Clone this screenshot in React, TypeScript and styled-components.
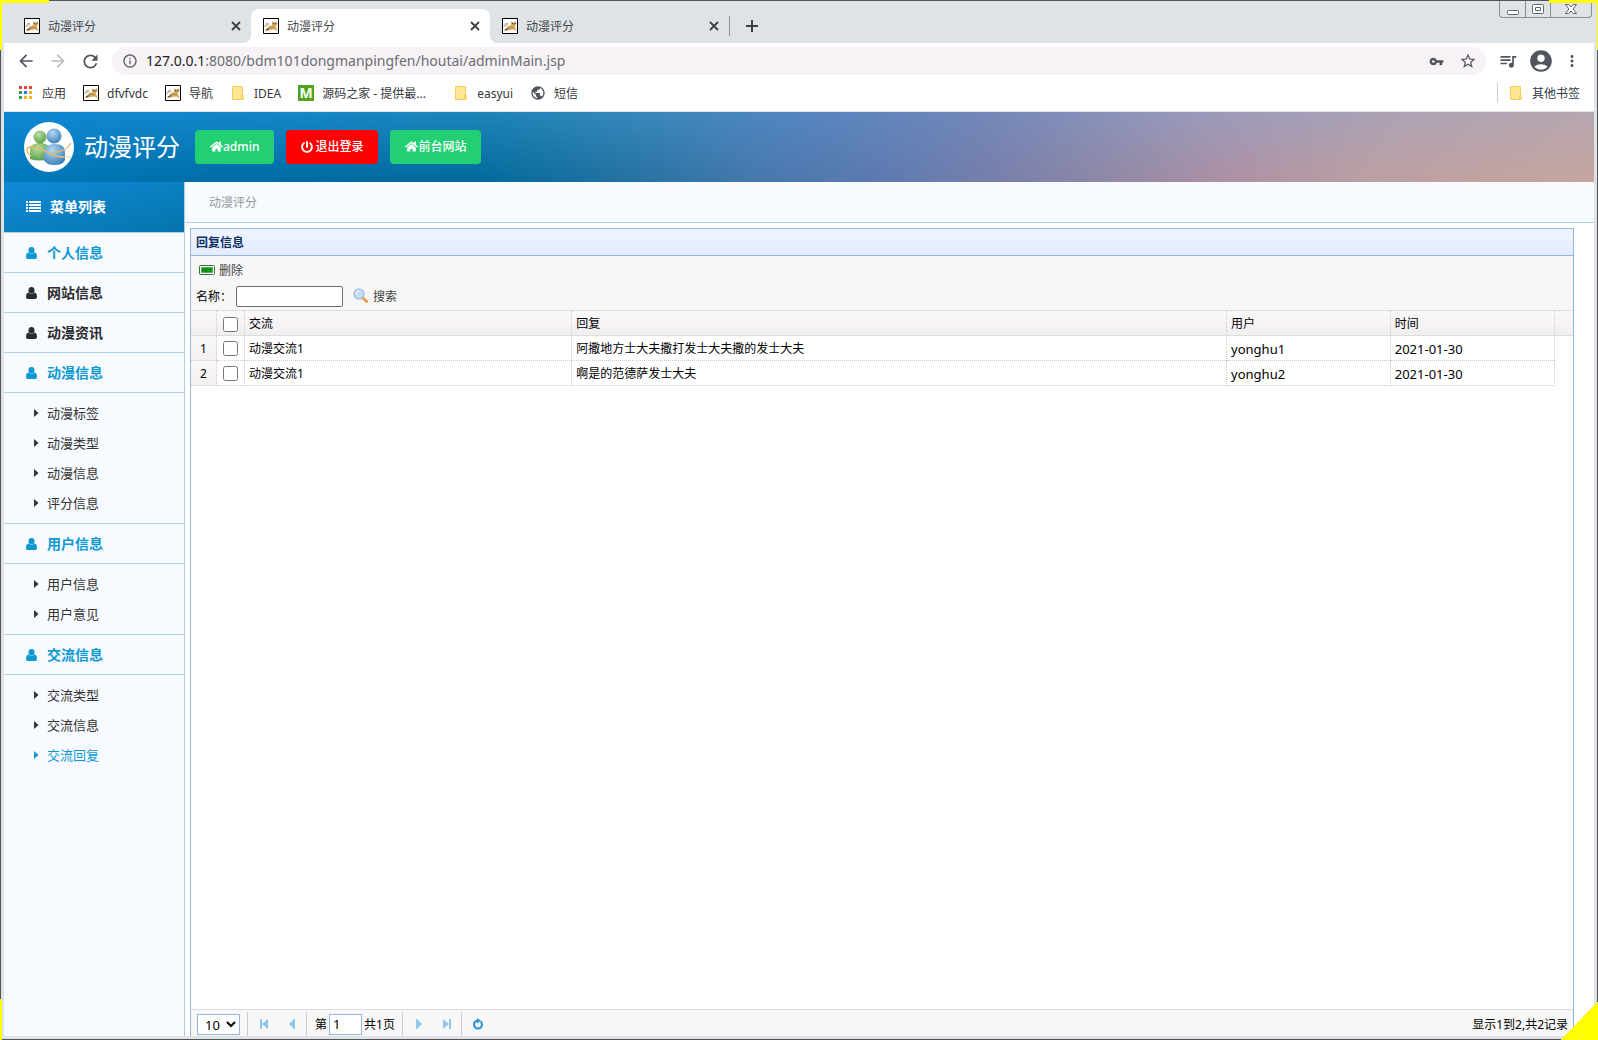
import React from "react";
import styled, { createGlobalStyle, css } from "styled-components";
import { FaHome, FaPowerOff } from "react-icons/fa";
import {
  MdArrowBack,
  MdArrowForward,
  MdRefresh,
  MdInfoOutline,
  MdVpnKey,
  MdStarBorder,
  MdQueueMusic,
  MdAccountCircle,
  MdMoreVert,
  MdPublic,
} from "react-icons/md";

const GlobalStyle = createGlobalStyle`
  *, *::before, *::after { box-sizing: border-box; }
  body {
    margin: 0;
    font-family: "Noto Sans", "Noto Sans CJK SC", sans-serif;
    font-size: 12px;
    line-height: 18px;
    color: #000;
  }
  button, input, select { font: inherit; color: inherit; }
  button { border: 0; padding: 0; background: none; cursor: pointer; }
  a { color: inherit; text-decoration: none; }
  svg { display: block; flex: none; }
`;

/* Small text beside an icon or a field, set level with its middle. */
const Caption = styled.span`
  padding-top: 2px;
`;

/* ---------- window frame ---------- */

const Window = styled.div`
  position: relative;
  display: flex;
  flex-direction: column;
  height: 100vh;
  padding: 1px 4px 4px;
  box-shadow: inset 0 0 0 1px #545456;
  background: #dee3e7;
  overflow: hidden;
`;

const Mark = styled.i<{ $right?: boolean; $bottom?: boolean }>`
  position: absolute;
  ${(p) => (p.$right ? "right: 0;" : "left: 0;")}
  ${(p) => (p.$bottom ? "bottom: 0;" : "top: 0;")}
  width: ${(p) => (p.$bottom ? 2 : 49)}px;
  height: ${(p) => (p.$bottom ? 41 : 50)}px;
  border: 0 solid #ff0;
  border-top-width: ${(p) => (p.$bottom ? 0 : 3)}px;
  border-left-width: ${(p) => (p.$right ? 0 : 2)}px;
  border-right-width: ${(p) => (p.$right ? 1 : 0)}px;
  pointer-events: none;
`;

const Fold = styled.i`
  position: absolute;
  right: 0;
  bottom: 0;
  width: 38px;
  height: 38px;
  background: linear-gradient(135deg, transparent 50%, #ff0 50%);
  pointer-events: none;
`;

const TabStrip = styled.div`
  display: flex;
  align-items: flex-end;
  flex: none;
  height: 42px;
  padding-left: 8px;
`;

const Tab = styled.div<{ $active?: boolean }>`
  position: relative;
  display: flex;
  align-items: center;
  gap: 8px;
  width: 239px;
  height: 34px;
  padding: 0 8px 0 12px;
  color: #45494d;
  ${(p) =>
    p.$active &&
    css`
      background: #fff;
      border-radius: 8px 8px 0 0;
      &::before,
      &::after {
        content: "";
        position: absolute;
        bottom: 0;
        width: 8px;
        height: 8px;
      }
      &::before {
        left: -8px;
        background: radial-gradient(circle at 0 0, transparent 8px, #fff 8px);
      }
      &::after {
        right: -8px;
        background: radial-gradient(circle at 100% 0, transparent 8px, #fff 8px);
      }
    `}
`;

const TabTitle = styled(Caption)`
  flex: 1;
`;

const TabButton = styled.button`
  display: grid;
  place-items: center;
  width: 14px;
  height: 16px;
  color: #3c4043;
`;

const NewTab = styled.div`
  display: flex;
  align-items: center;
  gap: 15px;
  height: 34px;
  &::before {
    content: "";
    width: 1px;
    height: 20px;
    background: #8f9398;
  }
`;

const WindowButtons = styled.div`
  display: flex;
  align-self: flex-start;
  height: 17px;
  margin: 0 2px 0 auto;
  border: 1px solid #8a8d92;
  border-top: 0;
  border-radius: 0 0 4px 4px;
`;

const WindowButton = styled.button<{ $wide?: boolean }>`
  display: grid;
  place-items: center;
  width: ${(p) => (p.$wide ? 41 : 25)}px;
  & + & {
    border-left: 1px solid #8a8d92;
  }
`;

const Toolbar = styled.div`
  display: flex;
  align-items: center;
  flex: none;
  gap: 12px;
  height: 36px;
  padding: 0 12px;
  background: #fff;
  color: #5a5f66;
`;

const ToolGroup = styled.div<{ $gap: number }>`
  display: flex;
  align-items: center;
  gap: ${(p) => p.$gap}px;
`;

const ToolButton = styled.button<{ $dim?: boolean; $wide?: boolean }>`
  display: grid;
  place-items: center;
  width: ${(p) => (p.$wide ? 24 : 20)}px;
  color: ${(p) => (p.$dim ? "#babcbe" : "#51565d")};
`;

const AddressBar = styled.div`
  display: flex;
  align-items: center;
  flex: 1;
  gap: 8px;
  height: 28px;
  padding: 0 8px 0 10px;
  border-radius: 14px;
  background: #f6f2f6;
`;

const Url = styled.span`
  flex: 1;
  font-size: 14px;
  line-height: 20px;
  color: #6a6d72;
  b {
    font-weight: 400;
    color: #202124;
  }
`;

const Bookmarks = styled.nav`
  display: flex;
  align-items: center;
  flex: none;
  gap: 17px;
  height: 33px;
  padding: 0 14px 4px;
  border-bottom: 1px solid #dee3e7;
  background: #fff;
  color: #35393d;
`;

const Bookmark = styled.a<{ $end?: boolean; $long?: boolean }>`
  display: flex;
  align-items: center;
  gap: 8px;
  min-width: ${(p) => (p.$long ? 138 : 0)}px;
  white-space: nowrap;
  ${(p) =>
    p.$end &&
    css`
      margin-left: auto;
      padding-left: 10px;
      border-left: 1px solid #ccced0;
    `}
`;

/* ---------- admin page ---------- */

const Banner = styled.header`
  position: relative;
  display: flex;
  align-items: center;
  flex: none;
  gap: 12px;
  height: 70px;
  padding: 0 20px 1px;
  background: linear-gradient(
    90deg,
    #0e88d4 0,
    #1787c6 20%,
    #2085b8 31%,
    #3b88bd 41%,
    #5586c0 50%,
    #7287b9 61%,
    #9a9abb 75%,
    #ada3b5 88%,
    #b7a7b0 100%
  );
  &::before {
    content: "";
    position: absolute;
    inset: 0;
    background: linear-gradient(
      90deg,
      #0079bb 0,
      #006ca4 14%,
      #016a9b 30%,
      #2371a0 39%,
      #4577ab 47%,
      #5d79b0 55%,
      #7a7fa9 63%,
      #968aa3 71%,
      #ae90a3 77%,
      #bd9fa1 86%,
      #c6a59e 100%
    );
    mask-image: linear-gradient(transparent, #000);
  }
  > * {
    position: relative;
  }
`;

const Brand = styled.h1`
  display: flex;
  align-items: center;
  gap: 10px;
  margin: 0 3px 0 0;
  font-size: 24px;
  line-height: 36px;
  font-weight: 400;
  color: #fff;
`;

const BannerLink = styled.a<{ $danger?: boolean }>`
  display: flex;
  align-items: center;
  height: 34px;
  padding: 0 15px;
  border-radius: 4px;
  background: ${(p) => (p.$danger ? "#f00" : "#22d073")};
  color: #fff;
  font-weight: 500;
  gap: ${(p) => (p.$danger ? 2 : 0)}px;
`;

const Content = styled.div`
  display: flex;
  flex: 1;
  min-height: 0;
  background: #fff;
`;

const Sidebar = styled.nav`
  flex: none;
  width: 181px;
  border-right: 1px solid #b0cfe0;
  background: #f7faff;
`;

const MenuTitle = styled.h2`
  display: flex;
  align-items: center;
  gap: 9px;
  height: 50px;
  margin: 0;
  padding-left: 22px;
  font-size: 14px;
  line-height: 20px;
  color: #fff;
  background: linear-gradient(165deg, #108ad8, #0a80c2 50%, #0674ab);
`;

const MenuList = styled.ul`
  margin: 0;
  padding: 0;
  list-style: none;
  border-top: 1px solid #b0cfe0;
`;

const MenuButton = styled.button<{ $on: boolean }>`
  display: flex;
  align-items: center;
  gap: 9px;
  width: 100%;
  height: 40px;
  padding-left: 22px;
  border-bottom: 1px solid #b0cfe0;
  font-size: 14px;
  font-weight: 700;
  color: ${(p) => (p.$on ? "#0c99d2" : "#2c2c2e")};
`;

const MenuGroup = styled.li``;

const SubMenu = styled.ul`
  margin: 0;
  padding: 5px 0;
  list-style: none;
  border-bottom: 1px solid #b0cfe0;
  ${MenuGroup}:last-child & {
    border-bottom: 0;
  }
`;

const SubLink = styled.a<{ $on?: boolean }>`
  display: flex;
  align-items: center;
  gap: 8px;
  height: 30px;
  padding: 0 0 1px 30px;
  font-size: 13px;
  color: ${(p) => (p.$on ? "#0c99d2" : "#333")};
`;

const Main = styled.main`
  display: flex;
  flex-direction: column;
  flex: 1;
  min-width: 0;
`;

const Crumb = styled.div`
  display: flex;
  align-items: center;
  flex: none;
  height: 41px;
  padding: 2px 0 0 24px;
  border-bottom: 1px solid #b0cfe0;
  background: #f7faff;
  color: #999;
`;

const Panel = styled.section`
  display: flex;
  flex-direction: column;
  flex: 1;
  min-height: 0;
  margin: 5px 20px 0 5px;
  border: 1px solid #95b8e7;
  border-bottom: 0;
`;

const PanelTitle = styled.h3`
  height: 27px;
  margin: 0;
  padding: 5px 5px 0;
  border-bottom: 1px solid #95b8e7;
  background: linear-gradient(#eff5ff, #e3ecff);
  font-size: 12px;
  line-height: 18px;
  color: #0e2d5f;
`;

const GridTools = styled.div`
  display: flex;
  flex-direction: column;
  height: 55px;
  padding: 1px 5px 0;
  border-bottom: 1px solid #ddd;
  background: #f7f7f7;
`;

const ToolRow = styled.form`
  display: flex;
  align-items: center;
  height: 26px;
`;

const LinkButton = styled.button<{ $indent: number }>`
  display: flex;
  align-items: center;
  gap: 4px;
  margin-left: ${(p) => p.$indent}px;
  color: #444;
`;

const NameInput = styled.input`
  width: 107px;
  height: 21px;
  margin-left: 4px;
  padding: 1px 4px;
  border: 1px solid #6f6f6f;
  border-radius: 2px;
  background: #fff;
`;

const GridBody = styled.div`
  flex: 1;
  min-height: 0;
  padding-right: 18px;
  background: linear-gradient(#ddd, #ddd) 0 24px / 100% 1px no-repeat,
    linear-gradient(#f9f9f9, #f6f2f6 60%, #efefef) 0 0 / 100% 24px no-repeat;
`;

const Grid = styled.table`
  width: 100%;
  table-layout: fixed;
  border-spacing: 0;
  th,
  td {
    height: 25px;
    padding: 1px 4px 0;
    border: 0 dotted #ccc;
    border-right-width: 1px;
    text-align: left;
    font-weight: 400;
    white-space: nowrap;
    overflow: hidden;
  }
  td {
    border-bottom-width: 1px;
  }
`;

const Col = styled.col<{ $width?: string }>`
  width: ${(p) => p.$width ?? "auto"};
`;

const NumberCell = styled.td`
  && {
    padding: 1px 0 0;
    text-align: center;
    background: linear-gradient(#f9f9f9, #f4f0f2);
  }
`;

const LatinCell = styled.td`
  font-size: 13px;
`;

const Check = styled.input.attrs({ type: "checkbox" })`
  display: block;
  width: 15px;
  height: 15px;
  margin: 0 0 0 2px;
`;

const Pager = styled.div`
  display: flex;
  align-items: center;
  flex: none;
  height: 27px;
  padding: 2px 5px 0 6px;
  border-top: 1px solid #ddd;
  background: #f7f7f7;
`;

const PageSize = styled.select`
  width: 43px;
  height: 21px;
  padding: 0 0 0 3px;
  border: 1px solid #95b8e7;
  background: #fff;
  font-size: 13px;
  line-height: 18px;
`;

const Divider = styled.i<{ $flush?: boolean }>`
  width: 1px;
  height: 24px;
  margin: 0 2px 0 ${(p) => (p.$flush ? 0 : 7)}px;
  background: #ccc;
`;

const PageButton = styled.button`
  display: grid;
  place-items: center;
  width: 28px;
  height: 24px;
`;

const PageLabel = styled.label`
  display: flex;
  align-items: center;
  gap: 2px;
  padding-left: 6px;
`;

const PageInput = styled.input`
  width: 33px;
  height: 21px;
  padding: 0 3px;
  border: 1px solid #95b8e7;
  background: #fff;
  font-size: 13px;
`;

const Summary = styled(Caption)`
  margin-left: auto;
`;

/* ---------- drawings ---------- */

const CrossIcon = () => (
  <svg width="10" height="10" viewBox="0 0 10 10">
    <path stroke="currentColor" strokeWidth="1.800" d="M1 1l8 8M9 1L1 9" />
  </svg>
);

const PlusIcon = () => (
  <svg width="12" height="12" viewBox="0 0 12 12">
    <path stroke="currentColor" strokeWidth="2" d="M6 0v12M0 6h12" />
  </svg>
);

const CatIcon = () => (
  <svg width="16" height="16" viewBox="0 0 16 16">
    <path fill="#fff" stroke="#000" d="M.5.5h15v15H.5z" />
    <path fill="#d8aa5e" d="M9 3l1.500 1.200h2L14 3l.4 3-1.400 2 .4 2 1.600 3.500-3.500-2-2.500.2-3.500.8L2 13.500l1.500-2.500L6 8l3-.8z" />
    <path fill="none" stroke="#8a775a" strokeWidth=".7" d="M2 9c0-3 3-4 4-2M5 11l3-2 4 1M10 6h3" />
    <path fill="#444" d="M2 12l3-1.500 1.500.3-2.500 1.500zM10 5h1v1h-1zM12.500 5h1v1h-1z" />
    <path fill="#b7b7b7" d="M3 5h3v1H3zM2 7h3v1H2z" />
  </svg>
);

const AppsIcon = () => {
  const fills = ["#ea4335", "#ea4335", "#ea4335", "#34a05a", "#2f7de1", "#fbb61a", "#34a05a", "#fbb61a", "#fbb61a"];
  return (
    <svg width="16" height="16" viewBox="0 0 16 16">
      {fills.map((fill, i) => (
        <rect key={i} x={1 + (i % 3) * 5} y={1 + Math.floor(i / 3) * 5} width="3" height="3" fill={fill} />
      ))}
    </svg>
  );
};

const FolderIcon = () => (
  <svg width="16" height="16" viewBox="0 0 16 16">
    <path fill="#ffe594" stroke="#f0cf5e" d="M2.500 1.500h10v13h-10z" />
    <path fill="#ffe594" stroke="#f0cf5e" d="M11.500 10.500h2v4h-2z" />
  </svg>
);

const LetterBadge = styled.span`
  display: grid;
  place-items: center;
  width: 16px;
  height: 16px;
  background: #4fa51b;
  color: #fff;
  font-size: 14px;
  font-weight: 700;
  line-height: 16px;
`;

const PeopleLogo = () => (
  <svg width="50" height="50" viewBox="0 0 50 50">
    <defs>
      <radialGradient id="green" cx=".4" cy=".3" r=".8">
        <stop offset="0" stopColor="#b9dfa0" />
        <stop offset="1" stopColor="#4c9a45" />
      </radialGradient>
      <radialGradient id="blue" cx=".4" cy=".3" r=".8">
        <stop offset="0" stopColor="#b5d9f3" />
        <stop offset="1" stopColor="#2f78b4" />
      </radialGradient>
    </defs>
    <circle cx="25" cy="25" r="25" fill="#fff" />
    <path fill="url(#green)" d="M6 37V28c0-5 4-7 10-7s9 2 9 7v9q-10 3-19 0z" />
    <circle cx="16" cy="15" r="6.500" fill="url(#green)" />
    <path fill="url(#blue)" d="M20 38V31c0-6 4-9 11-9s10 3 10 9v7q-2 5-10.500 5T20 38z" />
    <circle cx="30" cy="14" r="7.500" fill="url(#blue)" />
    <path fill="none" stroke="#f0b65c" strokeWidth="1.400" d="M7 34C0 28 3 24 10 25c12 2 18 11 29 10M31 30c8 0 13-4 16-9" />
    <path fill="none" stroke="#f3cc91" d="M36 35h11" />
  </svg>
);

const ListIcon = () => (
  <svg width="15" height="12" viewBox="0 0 15 12" fill="#fff">
    {[0, 3, 6, 9].map((y) => (
      <path key={y} d={`M0 ${y}h2v2H0zM3 ${y}h12v2H3z`} />
    ))}
  </svg>
);

const UserIcon = () => (
  <svg width="12" height="12" viewBox="0 0 12 12" fill="currentColor">
    <ellipse cx="5.500" cy="3.200" rx="3" ry="3.200" />
    <path d="M2.500 5.500Q5.500 8 8.500 5.500 11 5.800 11 10q0 2-1.800 2H1.800Q0 12 0 10 0 5.800 2.500 5.500z" />
  </svg>
);

const CaretIcon = () => (
  <svg width="5" height="8" viewBox="0 0 5 8" fill="currentColor">
    <path d="M0 0l4.500 4L0 8z" />
  </svg>
);

const DeleteIcon = () => (
  <svg width="16" height="16" viewBox="0 0 16 16">
    <rect x=".5" y="3.500" width="15" height="9" rx="1" fill="#fff" stroke="#2f7542" />
    <path fill="#0f9312" stroke="#4d8b4e" strokeWidth=".6" d="M2.500 5.500h11v5h-11z" />
  </svg>
);

const SearchIcon = () => (
  <svg width="16" height="16" viewBox="0 0 16 16">
    <path stroke="#e69a48" strokeWidth="2.600" strokeLinecap="round" d="M10.500 10.500l3.200 3" />
    <circle cx="6" cy="6" r="5" fill="#bfe0fb" stroke="#9fb4d8" strokeWidth="1.200" />
    <path fill="none" stroke="#eef8ff" strokeWidth="1.500" d="M3 5.700c.3-2 1.500-2.800 3-2.800" />
  </svg>
);

const ArrowIcon = ({ back, end }: { back?: boolean; end?: boolean }) => (
  <svg width="10" height="12" viewBox="0 0 10 12" fill="#8ec6ef">
    <g transform={back ? "matrix(-1 0 0 1 10 0)" : undefined}>
      <path d={end ? "M1 1l6 5-6 5zM7 1h2v10H7z" : "M2 1h1l5 5-5 5H2z"} />
    </g>
  </svg>
);

const ReloadIcon = () => (
  <svg width="12" height="12" viewBox="0 0 12 12">
    <path fill="none" stroke="#2a93da" strokeWidth="2" d="M8.600 3.400A4 4 0 1 1 3.400 3.400Q4.200 2.700 5.500 2.700" />
    <path fill="#2a93da" d="M5 0l4 2.700-4 2.700z" />
  </svg>
);

const MinimizeGlyph = () => (
  <svg width="14" height="14" viewBox="0 0 14 14" fill="#fff" stroke="#61656b">
    <rect x="1.500" y="8.500" width="11" height="4" rx="1" />
  </svg>
);
const RestoreGlyph = () => (
  <svg width="14" height="14" viewBox="0 0 14 14" fill="#fff" stroke="#61656b">
    <rect x="1.500" y="2.500" width="11" height="9" rx="1" />
    <path fill="none" d="M4.500 5.500h5v3h-5z" />
  </svg>
);
const CloseGlyph = () => (
  <svg width="14" height="14" viewBox="0 0 14 14" fill="#fff" stroke="#61656b">
    <path d="M1.500 2.500h3L7 5l2.500-2.500h3L9 7l3.500 4.500h-3L7 9l-2.500 2.500h-3L5 7z" />
  </svg>
);

/* ---------- data ---------- */

const menu = [
  { title: "个人信息", on: true, items: [] },
  { title: "网站信息", on: false, items: [] },
  { title: "动漫资讯", on: false, items: [] },
  { title: "动漫信息", on: true, items: ["动漫标签", "动漫类型", "动漫信息", "评分信息"] },
  { title: "用户信息", on: true, items: ["用户信息", "用户意见"] },
  { title: "交流信息", on: true, items: ["交流类型", "交流信息", "交流回复"] },
];

const replies = [
  { topic: "动漫交流1", text: "阿撒地方士大夫撒打发士大夫撒的发士大夫", user: "yonghu1", date: "2021-01-30" },
  { topic: "动漫交流1", text: "啊是的范德萨发士大夫", user: "yonghu2", date: "2021-01-30" },
];

const bookmarks = [
  { label: "应用", icon: <AppsIcon /> },
  { label: "dfvfvdc", icon: <CatIcon /> },
  { label: "导航", icon: <CatIcon /> },
  { label: "IDEA", icon: <FolderIcon /> },
  { label: "源码之家 - 提供最...", icon: <LetterBadge>M</LetterBadge>, long: true },
  { label: "easyui", icon: <FolderIcon /> },
  { label: "短信", icon: <MdPublic size={16} color="#51565d" /> },
];

export default function App() {
  return (
    <>
      <GlobalStyle />
      <Window>
        <TabStrip>
          {[0, 1, 2].map((i) => (
            <Tab key={i} $active={i === 1}>
              <CatIcon />
              <TabTitle>动漫评分</TabTitle>
              <TabButton aria-label="关闭标签页"><CrossIcon /></TabButton>
            </Tab>
          ))}
          <NewTab>
            <TabButton aria-label="新标签页"><PlusIcon /></TabButton>
          </NewTab>
          <WindowButtons>
            <WindowButton aria-label="最小化"><MinimizeGlyph /></WindowButton>
            <WindowButton aria-label="还原"><RestoreGlyph /></WindowButton>
            <WindowButton aria-label="关闭" $wide><CloseGlyph /></WindowButton>
          </WindowButtons>
        </TabStrip>

        <Toolbar>
          <ToolButton aria-label="后退"><MdArrowBack size={20} /></ToolButton>
          <ToolButton aria-label="前进" $dim><MdArrowForward size={20} /></ToolButton>
          <ToolButton aria-label="刷新"><MdRefresh size={21} /></ToolButton>
          <AddressBar>
            <MdInfoOutline size={16} />
            <Url><b>127.0.0.1</b>:8080/bdm101dongmanpingfen/houtai/adminMain.jsp</Url>
            <ToolGroup $gap={12}>
              <ToolButton aria-label="密码"><MdVpnKey size={15} /></ToolButton>
              <ToolButton aria-label="收藏"><MdStarBorder size={18} /></ToolButton>
            </ToolGroup>
          </AddressBar>
          <ToolGroup $gap={10}>
            <ToolButton aria-label="媒体"><MdQueueMusic size={20} /></ToolButton>
            <ToolButton aria-label="用户" $wide><MdAccountCircle size={26} /></ToolButton>
            <ToolButton aria-label="菜单"><MdMoreVert size={18} /></ToolButton>
          </ToolGroup>
        </Toolbar>

        <Bookmarks>
          {bookmarks.map((b) => (
            <Bookmark key={b.label} href="#" $long={b.long}>
              {b.icon}
              <Caption>{b.label}</Caption>
            </Bookmark>
          ))}
          <Bookmark href="#" $end><FolderIcon /><Caption>其他书签</Caption></Bookmark>
        </Bookmarks>

        <Banner>
          <Brand><PeopleLogo />动漫评分</Brand>
          <BannerLink href="#"><FaHome size={13} />admin</BannerLink>
          <BannerLink href="#" $danger><FaPowerOff size={12} />退出登录</BannerLink>
          <BannerLink href="#"><FaHome size={13} />前台网站</BannerLink>
        </Banner>

        <Content>
          <Sidebar>
            <MenuTitle><ListIcon />菜单列表</MenuTitle>
            <MenuList>
              {menu.map((group) => (
                <MenuGroup key={group.title}>
                  <MenuButton $on={group.on}><UserIcon />{group.title}</MenuButton>
                  {group.items.length > 0 && (
                    <SubMenu>
                      {group.items.map((item) => (
                        <li key={item}>
                          <SubLink href="#" $on={item === "交流回复"}>
                            <CaretIcon />{item}
                          </SubLink>
                        </li>
                      ))}
                    </SubMenu>
                  )}
                </MenuGroup>
              ))}
            </MenuList>
          </Sidebar>

          <Main>
            <Crumb>动漫评分</Crumb>
            <Panel>
              <PanelTitle>回复信息</PanelTitle>
              <GridTools>
                <ToolRow as="div">
                  <LinkButton $indent={3}><DeleteIcon /><Caption>删除</Caption></LinkButton>
                </ToolRow>
                <ToolRow onSubmit={(e: React.FormEvent) => e.preventDefault()}>
                  <Caption as="label" htmlFor="name">名称：</Caption>
                  <NameInput id="name" />
                  <LinkButton $indent={10}><SearchIcon /><Caption>搜索</Caption></LinkButton>
                </ToolRow>
              </GridTools>
              <GridBody>
                <Grid>
                  <colgroup>
                    <Col $width="26px" />
                    <Col $width="28px" />
                    <Col $width="24%" />
                    <Col $width="48%" />
                    <Col $width="12%" />
                    <Col />
                  </colgroup>
                  <thead>
                    <tr>
                      <th />
                      <th><Check aria-label="全选" /></th>
                      <th>交流</th>
                      <th>回复</th>
                      <th>用户</th>
                      <th>时间</th>
                    </tr>
                  </thead>
                  <tbody>
                    {replies.map((r, i) => (
                      <tr key={r.user}>
                        <NumberCell>{i + 1}</NumberCell>
                        <td><Check aria-label={`选择 ${r.user}`} /></td>
                        <td>{r.topic}</td>
                        <td>{r.text}</td>
                        <LatinCell>{r.user}</LatinCell>
                        <LatinCell>{r.date}</LatinCell>
                      </tr>
                    ))}
                  </tbody>
                </Grid>
              </GridBody>
              <Pager>
                <PageSize aria-label="每页条数" defaultValue="10">
                  <option>10</option>
                  <option>20</option>
                </PageSize>
                <Divider />
                <PageButton aria-label="首页"><ArrowIcon back end /></PageButton>
                <PageButton aria-label="上一页"><ArrowIcon back /></PageButton>
                <Divider $flush />
                <PageLabel>
                  <Caption>第</Caption>
                  <PageInput defaultValue="1" />
                  <Caption>共1页</Caption>
                </PageLabel>
                <Divider />
                <PageButton aria-label="下一页"><ArrowIcon /></PageButton>
                <PageButton aria-label="末页"><ArrowIcon end /></PageButton>
                <Divider $flush />
                <PageButton aria-label="刷新列表"><ReloadIcon /></PageButton>
                <Summary>显示1到2,共2记录</Summary>
              </Pager>
            </Panel>
          </Main>
        </Content>
        <Mark />
        <Mark $right />
        <Mark $bottom />
        <Fold />
      </Window>
    </>
  );
}
